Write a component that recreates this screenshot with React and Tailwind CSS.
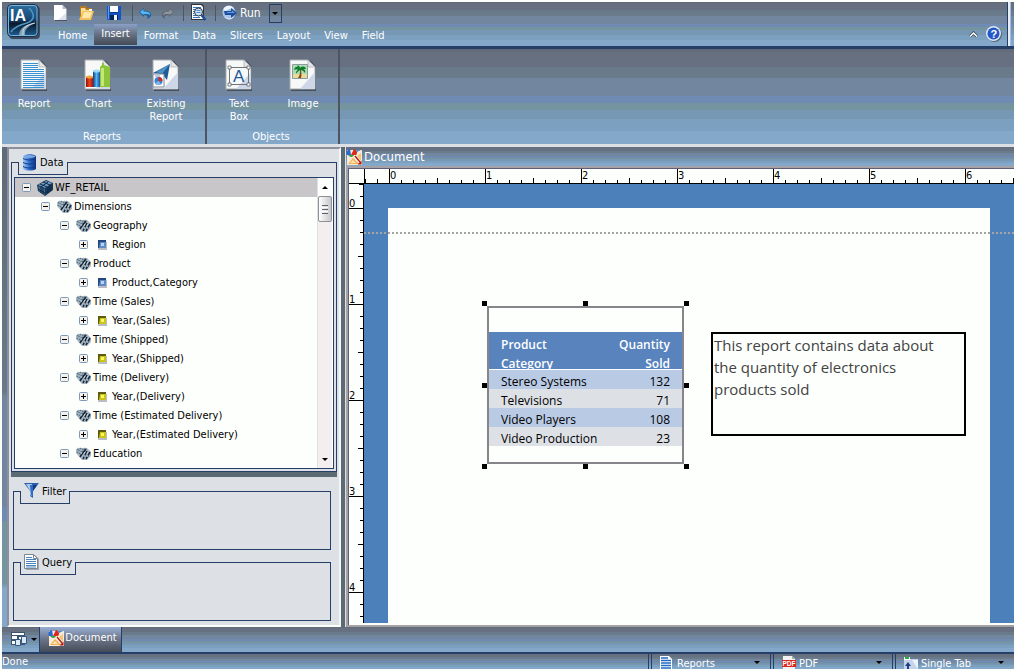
import React from "react";

const bands =
  "bg-[linear-gradient(to_bottom,#616775_0%,#667080_4%,#667080_19%,#687a8a_19%,#6a7b8b_31%,#72879f_31%,#72879f_50%,#6f8ab3_50%,#6f8ab3_57%,#7495a0_57%,#7495a0_64%,#7798b5_64%,#7798b5_74%,#7ca0c0_74%,#7ca0c0_86%,#84a8ca_86%,#84a8ca_100%)]";

const tabs = ["Home", "Insert", "Format", "Data", "Slicers", "Layout", "View", "Field"];

const tree = [
  { level: 0, label: "WF_RETAIL", icon: "cube" },
  { level: 1, label: "Dimensions", icon: "dim" },
  { level: 2, label: "Geography", icon: "dim" },
  { level: 3, label: "Region", icon: "blue" },
  { level: 2, label: "Product", icon: "dim" },
  { level: 3, label: "Product,Category", icon: "blue" },
  { level: 2, label: "Time (Sales)", icon: "dim" },
  { level: 3, label: "Year,(Sales)", icon: "yellow" },
  { level: 2, label: "Time (Shipped)", icon: "dim" },
  { level: 3, label: "Year,(Shipped)", icon: "yellow" },
  { level: 2, label: "Time (Delivery)", icon: "dim" },
  { level: 3, label: "Year,(Delivery)", icon: "yellow" },
  { level: 2, label: "Time (Estimated Delivery)", icon: "dim" },
  { level: 3, label: "Year,(Estimated Delivery)", icon: "yellow" },
  { level: 2, label: "Education", icon: "dim" },
];

const indents = ["pl-[7px]", "pl-[26px]", "pl-[45px]", "pl-[64px]"];

const sales = [
  { name: "Stereo Systems", sold: 132 },
  { name: "Televisions", sold: 71 },
  { name: "Video Players", sold: 108 },
  { name: "Video Production", sold: 23 },
];

const Caret = ({ className = "" }) => (
  <svg width="6" height="3" viewBox="0 0 6 3" className={`shrink-0 ${className}`}>
    <path d="M0 0h6L3 3z" fill="#000" />
  </svg>
);

const Logo = () => (
  <svg width="33" height="35" viewBox="0 0 33 35" className="shrink-0">
    <defs>
      <linearGradient id="logo" x1="0" y1="0" x2="0" y2="1">
        <stop offset="0" stopColor="#2d6f9f" />
        <stop offset="0.45" stopColor="#174a78" />
        <stop offset="0.6" stopColor="#0c1a2c" />
        <stop offset="1" stopColor="#1f6196" />
      </linearGradient>
    </defs>
    <rect x="2" y="2" width="31" height="33" rx="4" fill="#3d4c60" />
    <rect x="0.5" y="0.5" width="30.5" height="32" rx="4" fill="url(#logo)" stroke="#16304f" />
    <rect x="1.5" y="1.5" width="28.5" height="30" rx="3" fill="none" stroke="#7eb4d8" />
    <path d="M22 4c6 6 6 12-2 15-8 2-13 4-16 9" fill="none" stroke="#4f97c5" strokeWidth="1.500" />
    <path d="M28 19c-9 1-15 4-16 12h6c-1-6 4-9 10-12z" fill="#83a1b8" />
    <path d="M28 19c-9 2-13 5-12 12" fill="none" stroke="#d0e0eb" />
    <text x="3" y="17" fill="#fff" fontFamily="Liberation Sans, sans-serif" fontWeight="bold" fontSize="16">IA</text>
  </svg>
);

const NewIcon = () => (
  <svg width="15" height="16" viewBox="0 0 15 16">
    <path d="M2 1h9l3 4v11H2z" fill="#4c5260" />
    <path d="M1 0h8.500l4 4v11H1z" fill="#fff" />
    <path d="M9.500 0v4h4z" fill="#b8bec8" />
    <path d="M5 15l8-7v7z" fill="#dde3ee" />
  </svg>
);

const OpenIcon = () => (
  <svg width="17" height="16" viewBox="0 0 17 16">
    <path d="M2 15V2l1-1h5l1 2h5v11z" fill="#b7791f" />
    <path d="M3 3h4l1 2h5v5H3z" fill="#f8dc91" />
    <path d="M5 6h11l-3 9H1z" fill="#f3c05e" />
    <path d="M6 7h8l-2 6H4z" fill="#ffe8a8" />
    <path d="M11 4h3v2h-3z" fill="#fff" />
  </svg>
);

const SaveIcon = () => (
  <svg width="15" height="15" viewBox="0 0 15 15">
    <path d="M0 0h14v14H1l-1-1z" fill="#1554c0" />
    <path d="M3 0h8v6H3z" fill="#fff" />
    <path d="M1 0h1v13H1z" fill="#5aa1f0" />
    <path d="M3 9h8v5H3z" fill="#0a2458" />
    <path d="M7 9h3v5H7z" fill="#f5f5f5" />
    <path d="M3 6h8v1H3z" fill="#0b3b90" />
  </svg>
);

const UndoIcon = () => (
  <svg width="13" height="11" viewBox="0 0 13 11">
    <path d="M0 4l5-4v2.500c5 0 7 2 7 4.500 0 2-2 3-4 4 1-3 1-4-3-4V9z" fill="#1f5e9c" />
    <path d="M1 4l3.500-3V3.500c5 0 7 1 6.500 4-1-2-3-1.500-6.500-1.500V7z" fill="#59b8f2" />
  </svg>
);

const RedoIcon = () => (
  <svg width="13" height="11" viewBox="0 0 13 11">
    <path d="M12 4L7 0v2.500C2 2.500 0 4.500 0 7c0 2 1 3 3 4-1-3 0-4 4-4V9z" fill="#5d6470" />
    <path d="M11 4L7.500 1V3.500C3 3.500 1.500 4 1 7.500c2-2 3-1.500 6.500-1.500V7z" fill="#8f959e" />
  </svg>
);

const PreviewIcon = () => (
  <svg width="17" height="18" viewBox="0 0 17 18">
    <path d="M1 0h11l2 2v14H1z" fill="#30343c" />
    <path d="M2 1h9l2 2v12H2z" fill="#fff" />
    <path d="M3 3.500h8M3 5.500h2M3 7.500h1M3 9.500h1M3 11.500h3M3 13.500h7" stroke="#3477c4" />
    <circle cx="8.500" cy="8" r="4" fill="#c9e4f6" stroke="#2a313c" />
    <path d="M6.500 6.500h4M6.500 8.500h4" stroke="#568fc5" />
    <path d="M11.500 11l4 5" stroke="#1b4f99" strokeWidth="2.500" />
  </svg>
);

const RunIcon = () => (
  <svg width="16" height="16" viewBox="0 0 16 16">
    <ellipse cx="7" cy="7.500" rx="6.500" ry="7" fill="#a9c3e6" />
    <path d="M1 5c2-6 10-5 11-1-3-1-6 0-8 2z" fill="#eef5fc" />
    <path d="M2 6h7V3l6 5-6 5v-3H3z" fill="#1c4f9f" />
    <path d="M5 7h5V5.500L13 8H5z" fill="#679ae0" />
    <path d="M3 12c3 3 7 2 8 0" fill="none" stroke="#e4eefa" />
  </svg>
);

const Page = ({ children }) => (
  <svg width="28" height="32" viewBox="0 0 28 32">
    <path d="M2 2h20l5 6v24H2z" fill="#46505f" />
    <path d="M1 1h18l7 7v22H1z" fill="#f7f8f8" stroke="#a9abad" />
    <path d="M11 30L26 13v17z" fill="#cdd7e8" />
    <path d="M19 1v7h7z" fill="#e4e5e6" stroke="#a9abad" strokeWidth="0.700" />
    {children}
  </svg>
);

const ReportIcon = () => (
  <Page>
    <path
      d="M3 4.500h15M3 6.500h15M3 8.500h15M3 10.500h21M3 12.500h21M3 14.500h21M3 16.500h21M3 18.500h21M3 20.500h21M3 22.500h21M3 24.500h21M3 26.500h21M3 28.500h21"
      stroke="#3b90cf"
    />
  </Page>
);

const ChartIcon = () => (
  <Page>
    <defs>
      <linearGradient id="redBar">
        <stop offset="0" stopColor="#8c1208" />
        <stop offset="0.5" stopColor="#f0421c" />
        <stop offset="1" stopColor="#a01a0a" />
      </linearGradient>
      <linearGradient id="blueBar">
        <stop offset="0" stopColor="#0b3d80" />
        <stop offset="0.5" stopColor="#55b4f4" />
        <stop offset="1" stopColor="#114f9a" />
      </linearGradient>
    </defs>
    <path d="M2 18h7v10H2z" fill="url(#redBar)" />
    <ellipse cx="5.500" cy="18" rx="3.500" ry="1.500" fill="#f6a13a" />
    <path d="M9 12h7v16H9z" fill="url(#blueBar)" />
    <ellipse cx="12.500" cy="12" rx="3.500" ry="1.500" fill="#9dd9fb" />
    <path d="M16 8l2-2v-2h2v2l6 2v20H16z" fill="#8cc43c" />
    <path d="M17 9h3v18h-3z" fill="#c5e77a" />
  </Page>
);

const ExistingIcon = () => (
  <Page>
    <path d="M1 14L18 5l-3 16-4-5-6 10-2-2 6-9z" fill="#1e5b97" />
    <path d="M4 13L18 5 10 15z" fill="#4d91c6" />
    <path d="M1 15h11v13H1z" fill="#fff" stroke="#7c8796" />
    <circle cx="6.500" cy="22" r="4" fill="#3a7ed0" />
    <path d="M6.500 22v-4a4 4 0 0 1 4 4z" fill="#d32b20" />
    <path d="M6.500 22l-3.500 2a4 4 0 0 0 6 1z" fill="#86b6e8" />
    <path d="M3 17h5" stroke="#7797bb" />
  </Page>
);

const TextBoxIcon = () => (
  <Page>
    <path d="M4.500 8.500h19v17h-19z" fill="none" stroke="#70757d" />
    <path d="M3 7h3v3H3zM22 7h3v3h-3zM3 24h3v3H3zM22 24h3v3h-3z" fill="#fff" stroke="#60656d" strokeWidth="0.800" />
    <text x="8" y="23" fill="#1f5b9b" fontFamily="Liberation Sans, sans-serif" fontSize="17">A</text>
  </Page>
);

const ImageIcon = () => (
  <Page>
    <path d="M3.500 5.500h15v14h-15z" fill="#a9deb0" stroke="#8d9aa5" />
    <path d="M4 15h14v4H4z" fill="#eadb9a" />
    <path d="M11 10c0 4 0 6-2 9h3c1-3 0-6 0-9z" fill="#8a4a18" />
    <path d="M11 10C9 7 6 7 5 11c2-1 3-1 4 0-2 1-2 2-2 4 2-3 3-3 4-4 2 0 4 1 5 3 1-3-1-4-2-4h3c-1-3-4-3-6-1 0-2-2-3-3-2z" fill="#0e7a2a" />
  </Page>
);

const DocumentIcon = () => (
  <svg width="16" height="16" viewBox="0 0 16 16" className="shrink-0">
    <rect x="1" y="1" width="15" height="15" fill="#f7ead8" />
    <path d="M4 0a4 4 0 0 0-3 6h4z" fill="#2868cf" />
    <path d="M5 6l3-6c3 1 4 4 2 6z" fill="#dc271d" />
    <path d="M2 6h6a3 3 0 0 1-5 1z" fill="#35a445" />
    <path d="M10 1h5l-4 2z" fill="#3491d6" />
    <path d="M2 15l5-6 6 6z" fill="#eeb150" />
    <path d="M4 14l3-3 3 3z" fill="#fbe3b4" />
    <path d="M15 4v8l-4-5z" fill="#f3c674" />
    <path d="M9 7l5 6" stroke="#b51212" strokeWidth="1.200" />
    <path d="M15.500 11.500v4h-4z" fill="#b51212" />
  </svg>
);

const DatabaseIcon = () => (
  <svg width="15" height="17" viewBox="0 0 15 17">
    <defs>
      <linearGradient id="db">
        <stop offset="0" stopColor="#a5cbf6" />
        <stop offset="0.5" stopColor="#2c6cca" />
        <stop offset="1" stopColor="#0c2f7a" />
      </linearGradient>
    </defs>
    <path d="M1 2c3-2.500 10-2.500 13 0v13c-3 2-10 2-13 0z" fill="url(#db)" />
    <path d="M1 4.500c4 2 9 2 13 0M1 8.500c4 2 9 2 13 0M1 12.500c4 2 9 2 13 0" fill="none" stroke="#123a84" />
    <ellipse cx="7.500" cy="2.500" rx="6" ry="1.500" fill="#7ca9e6" />
  </svg>
);

const FilterIcon = () => (
  <svg width="15" height="16" viewBox="0 0 15 16">
    <path d="M0 0h15L9 8v7l-3-2V8z" fill="#2b5eae" />
    <path d="M2 1h6v12l-2-1V8z" fill="#a8c8ec" />
    <path d="M6 2h3v11l-2-1z" fill="#2f6bc4" />
    <path d="M9 2h4L9 8z" fill="#143b82" />
  </svg>
);

const QueryIcon = () => (
  <svg width="15" height="16" viewBox="0 0 15 16">
    <path d="M2 1h9l4 4v11H2z" fill="#9ea6b0" />
    <path d="M.5.5h9l4 4v10H.5z" fill="#fff" stroke="#7c8692" />
    <path d="M9.500.5v4h4" fill="none" stroke="#7c8692" />
    <path d="M2 3.500h6M2 5.500h10M2 7.500h10M2 9.500h10M2 11.500h10M2 13h10" stroke="#4b83bd" />
  </svg>
);

const TreeIcon = ({ kind }) => {
  if (kind === "cube") {
    return (
      <svg width="17" height="16" viewBox="0 0 17 16">
        <path d="M0 5l9-5 7 3v7l-8 6-7-5z" fill="#173654" />
        <path d="M1 5l8-4 6 2-7 5z" fill="#6f9cc7" />
        <path d="M1 6l7 3v6l-6-4z" fill="#3f6c98" />
        <path d="M3 4l7 3M6 2l7 3M4 7l7-5M1 9l7 4M4 7v6M6 8v6M11 7v6M13 5v6" stroke="#0e2740" />
      </svg>
    );
  }
  if (kind === "dim") {
    return (
      <svg width="15" height="14" viewBox="0 0 15 14">
        <path d="M2 1h9l4 4v4l-4 4H6L0 6V3z" fill="#a9b8c3" />
        <path d="M1 3l2-2M1 6l4-5M3 7l5-6M5 7l5-6" stroke="#5c7688" strokeWidth="1.400" strokeDasharray="1.500 1" />
        <path d="M4 10l3-5M7 12l4-8M10 12l4-7M6 7l4-5" stroke="#16283a" strokeWidth="1.600" />
        <path d="M5 7l1-2M8 7l1-2M11 7l1-2M8 10l1-2M11 10l1-2" stroke="#c3d3de" />
      </svg>
    );
  }
  return (
    <svg width="11" height="10" viewBox="0 0 11 10">
      <path d="M2 2h8v8H1z" fill="#b9bcc2" />
      <path d="M1 0h8v8H1z" fill={kind === "blue" ? "#24477f" : "#5c5a0e"} />
      <path d="M3 2h6v6H2z" fill={kind === "blue" ? "#5f8bc9" : "#c9c51c"} />
      <path d="M4 3h3v3H4z" fill={kind === "blue" ? "#b9d4f4" : "#fbf95c"} />
    </svg>
  );
};

const Toggle = ({ open, label }) => (
  <button type="button" aria-label={label} aria-expanded={open} className="shrink-0">
    <svg width="9" height="9" viewBox="0 0 9 9" className="block">
      <rect x="0.500" y="0.500" width="8" height="8" rx="1" fill="#f3f1ea" stroke="#7b9ab9" />
      <path d={open ? "M2 4.500h5" : "M2 4.500h5M4.500 2v5"} stroke="#000" />
    </svg>
  </button>
);

const RibbonButton = ({ icon, label, wide }) => (
  <button
    type="button"
    className={`flex flex-col items-center gap-1.5 ${wide ? "w-[72px] px-3" : "w-16 px-4"}`}
  >
    {icon}
    <span className="leading-[13px]">{label}</span>
  </button>
);

const RibbonGroup = ({ title, children }) => (
  <div className="flex flex-col justify-between border-r-2 border-[#4d5563] pt-2.5 pr-[3px]">
    <div className="flex items-start">{children}</div>
    <div className="pb-px text-center leading-[13px]">{title}</div>
  </div>
);

// Group box whose tab hangs over the top border
const Panel = ({ icon, title, className = "", children }) => (
  <section className={`flex flex-col border border-[#253f68] ${className}`}>
    <h2 className="-mt-px ml-1.5 flex h-[13px] items-center self-start border-x border-b border-[#253f68] bg-[#dde1e6] px-[3px]">
      <span className="-mt-3 flex items-center gap-[3px]">
        {icon}
        <span className="pt-0.5">{title}</span>
      </span>
    </h2>
    {children}
  </section>
);

const DataTree = () => (
  <div className="mx-0.5 mt-0.5 mb-0.5 flex min-h-0 flex-1 border border-[#253f68] bg-[#fdfffd]">
    <ul className="min-w-0 flex-1 overflow-hidden">
      {tree.map((node, i) => (
        <li
          key={node.label}
          className={`flex h-[19px] items-center ${indents[node.level]} ${i === 0 ? "bg-[#c8c6c9]" : ""}`}
        >
          <Toggle open={node.level < 3} label={node.label} />
          <span className="ml-1.5 flex w-[17px] shrink-0 justify-center">
            <TreeIcon kind={node.icon} />
          </span>
          <span className="ml-px pt-0.5 whitespace-nowrap">{node.label}</span>
        </li>
      ))}
    </ul>
    <div className="mr-px flex w-[15px] flex-col items-center border-l border-[#dde1e6] bg-[#f4eeee]">
      <button type="button" aria-label="Scroll up" className="flex h-[18px] w-full items-center justify-center bg-[#fdfffd]">
        <Caret className="rotate-180" />
      </button>
      <div className="flex h-[26px] w-full flex-col items-center justify-center gap-px rounded-xs border border-[#8f9096] bg-linear-to-r from-white to-[#c8c6c9]">
        <span className="h-px w-1.5 bg-[#60636b]" />
        <span className="h-px w-1.5 bg-white" />
        <span className="h-px w-1.5 bg-[#60636b]" />
        <span className="h-px w-1.5 bg-white" />
        <span className="h-px w-1.5 bg-[#60636b]" />
      </div>
      <div className="flex-1" />
      <button type="button" aria-label="Scroll down" className="flex h-[18px] w-full items-center justify-center">
        <Caret />
      </button>
    </div>
  </div>
);

const across = [0, 1, 2, 3, 4, 5, 6];
const down = [0, 1, 2, 3, 4];
const eighths = [12, 24, 36, 48, 60, 72, 84];

const HorizontalRuler = () => (
  <svg width="100%" height="14" className="block bg-[#fdfffd]" shapeRendering="crispEdges">
    <path d="M15.500 0v14M16.500 10v4M28.500 10v4" stroke="#000" />
    {across.map((n) => (
      <g key={n} transform={`translate(${n * 96 + 40} 0)`}>
        <path d="M.5 0v14" stroke="#000" />
        {eighths.map((x) => (
          <path key={x} d={`M${x}.5 ${x === 48 ? 9 : 11}V14`} stroke="#000" />
        ))}
        <text x="1" y="10" fontSize="11">{n}</text>
      </g>
    ))}
  </svg>
);

const VerticalRuler = () => (
  <svg width="14" height="100%" className="block bg-[#fdfffd]" shapeRendering="crispEdges">
    <path d="M10 .5h4M11 12.500h3" stroke="#000" />
    {down.map((n) => (
      <g key={n} transform={`translate(0 ${n * 96 + 24})`}>
        <path d="M0 .5h14" stroke="#000" />
        {eighths.map((y) => (
          <path key={y} d={`M${y === 48 ? 9 : 11} ${y}.5H14`} stroke="#000" />
        ))}
        <text x="0" y="-1" fontSize="11">{n}</text>
      </g>
    ))}
  </svg>
);

const handles = [
  "-top-[7px] -left-[7px]",
  "-top-[7px] left-[94px]",
  "-top-[7px] -right-[7px]",
  "top-[75px] -left-[7px]",
  "top-[75px] -right-[7px]",
  "-bottom-[7px] -left-[7px]",
  "-bottom-[7px] left-[94px]",
  "-bottom-[7px] -right-[7px]",
];

const ReportTable = () => (
  <div className="absolute top-[98px] left-[99px] w-[197px] border-2 border-[#878589] pt-6 pb-4 font-['Open_Sans','Noto_Sans',sans-serif] text-xs text-black">
    <table className="w-full border-collapse">
      <thead>
        <tr className="border-b border-white bg-[#5883bd] text-white">
          <th className="p-0 text-left font-semibold">
            <div className="h-[37px] overflow-hidden pt-[3px] pl-3 leading-[19px]">
              Product<br />Category
            </div>
          </th>
          <th className="p-0 text-right font-semibold">
            <div className="h-[37px] overflow-hidden pt-[3px] pr-3 leading-[19px]">
              Quantity<br />Sold
            </div>
          </th>
        </tr>
      </thead>
      <tbody>
        {sales.map((row, i) => (
          <tr key={row.name} className={i % 2 ? "bg-[#dde1e6]" : "bg-[#b9cbe4]"}>
            <td className="p-0 pt-1 pl-3 leading-[15px]">{row.name}</td>
            <td className="p-0 pt-1 pr-3 text-right leading-[15px]">{row.sold}</td>
          </tr>
        ))}
      </tbody>
    </table>
    {handles.map((pos) => (
      <span key={pos} className={`absolute size-[5px] bg-black ${pos}`} />
    ))}
  </div>
);

const DocumentWindow = () => (
  <main className="flex min-w-0 flex-1 flex-col border-l border-[#dde1e6]">
    <div className={`flex h-[19px] items-center gap-0.5 text-[13px] text-white ${bands}`}>
      <DocumentIcon />
      <h1 className="leading-4">Document</h1>
    </div>
    <div className="flex min-h-0 flex-1 flex-col border-t-2 border-b-2 border-l-2 border-[#a5a1a4]">
      <div className="flex min-h-0 flex-1 flex-col border-t border-l border-[#5d6078] bg-[#fdfffd] pb-0.5">
        <div className="border-b border-black">
          <HorizontalRuler />
        </div>
        <div className="flex min-h-0 flex-1">
          <div className="shrink-0 border-r border-black">
            <VerticalRuler />
          </div>
          <div className="relative flex min-w-0 flex-1 overflow-hidden bg-[#4b80bb] px-6 pt-6">
            <div className="relative flex-1 bg-[#fdfffd]">
              <ReportTable />
              <div className="absolute top-[124px] left-[323px] h-[104px] w-[255px] border-2 border-black pr-3 pl-px font-['Open_Sans','Noto_Sans',sans-serif] text-[15px] leading-[22px] text-[#434343]">
                This report contains data about the quantity of electronics products sold
              </div>
            </div>
            <div className="absolute inset-x-0 top-12 h-0.5 bg-[repeating-linear-gradient(to_right,#a5a5a5_0_2px,transparent_2px_4px)]" />
          </div>
        </div>
      </div>
    </div>
  </main>
);

const StatusSelect = ({ icon, name, label }) => (
  <label className="flex w-[122px] items-center border-l-4 border-double border-[#253f68] pt-0.5 pl-2">
    {icon}
    <select
      aria-label={name}
      className="ml-[3px] min-w-0 flex-1 appearance-none bg-transparent pt-0.5 leading-[13px] text-white"
      defaultValue={label}
    >
      <option>{label}</option>
    </select>
    <Caret className="mr-2.5" />
  </label>
);

const PdfIcon = () => (
  <svg width="14" height="14" viewBox="0 0 14 14" className="shrink-0">
    <path d="M1 0h9l3 3v11H1z" fill="#f2f2f2" />
    <path d="M10 0v3h3z" fill="#aaa" />
    <rect y="4" width="14" height="7" fill="#d8281f" />
    <text x="0.500" y="10" fill="#fff" fontFamily="Liberation Sans, sans-serif" fontWeight="bold" fontSize="6.500">PDF</text>
  </svg>
);

const ReportsIcon = () => (
  <svg width="14" height="14" viewBox="0 0 14 14" className="shrink-0">
    <path d="M0 0h9l3 3v11H0z" fill="#fff" />
    <path d="M1 2h7M1 4.500h10M1 7h10M1 9.500h10M1 12h10" stroke="#1f6ac2" strokeWidth="1.300" />
  </svg>
);

const TabIcon = () => (
  <svg width="14" height="12" viewBox="0 0 14 12" className="shrink-0">
    <path d="M0 2h14v10H0z" fill="#c5d4ea" />
    <path d="M0 0h6v3H0z" fill="#fff" />
    <path d="M1 0h4v2H1z" fill="#1fb53a" />
    <path d="M4 5l3 4H5v3H3V9H1z" fill="#1b4086" />
    <path d="M8 3h6v9z" fill="#edf3fb" />
  </svg>
);

const WindowsIcon = () => (
  <svg width="16" height="15" viewBox="0 0 16 15">
    <path d="M0 0h14v13H0z" fill="#3b546f" />
    <path d="M1 1h12v2H1zM1 4h5v3H1zM1 9h5v3H1zM8 5h5v6H8z" fill="#fff" />
    <path d="M4.500 7.500h5v6h-5zM10.500 4.500h5v7h-5z" fill="#dce9f5" stroke="#34597c" />
  </svg>
);

const Separator = () => <span className="h-4 w-px bg-[#4d5563]" />;

export default function App() {
  return (
    <div className="h-screen bg-[#fdfffd] p-0.5 font-['DejaVu_Sans_Condensed','DejaVu_Sans',sans-serif] text-[11px] text-black">
      <div className="flex h-full flex-col overflow-hidden">
        <header className={`flex h-[47px] shrink-0 border-b-3 border-[#253f68] text-white ${bands}`}>
          <div className="w-12 shrink-0 pt-0.5 pl-[5px]">
            <Logo />
          </div>
          <div className="flex flex-1 flex-col">
            <div className="flex h-[22px] items-center">
              <button type="button" aria-label="New" className="ml-[3px]"><NewIcon /></button>
              <button type="button" aria-label="Open" className="ml-2.5"><OpenIcon /></button>
              <button type="button" aria-label="Save" className="mr-2.5 ml-3"><SaveIcon /></button>
              <Separator />
              <button type="button" aria-label="Undo" className="ml-1.5"><UndoIcon /></button>
              <button type="button" aria-label="Redo" className="mr-2 ml-2.5"><RedoIcon /></button>
              <Separator />
              <button type="button" aria-label="Preview" className="mr-2 ml-1.5"><PreviewIcon /></button>
              <Separator />
              <button type="button" className="ml-1.5 flex items-center gap-0.5 text-xs">
                <RunIcon />
                Run
              </button>
              <button type="button" aria-label="Run options" className="ml-2 flex h-[19px] w-[13px] items-center justify-center border border-[#253f68]">
                <Caret />
              </button>
            </div>
            <nav className="flex items-start pl-px">
              {tabs.map((tab) => (
                <button
                  key={tab}
                  type="button"
                  className={
                    tab === "Insert"
                      ? "h-[21px] bg-linear-to-b from-[#8ba0c8] via-[#667080] to-[#444a57] px-[7px]"
                      : "h-[21px] px-[7px] pt-1"
                  }
                >
                  {tab}
                </button>
              ))}
            </nav>
          </div>
          <div className="flex items-center gap-2 pt-5 pr-[5px]">
            <button type="button" aria-label="Collapse ribbon">
              <svg width="9" height="7" viewBox="0 0 9 7">
                <path d="M1 5.500L4.500 2 8 5.500" fill="none" stroke="#384656" strokeWidth="3" />
                <path d="M1 5.500L4.500 2 8 5.500" fill="none" stroke="#fff" strokeWidth="1.500" />
              </svg>
            </button>
            <button type="button" aria-label="Help">
              <svg width="16" height="16" viewBox="0 0 16 16">
                <circle cx="8.500" cy="8.500" r="7.500" fill="#55657a" />
                <circle cx="7.500" cy="7.500" r="7.500" fill="#dfe8f5" />
                <circle cx="7.500" cy="7.500" r="6" fill="#2458c6" />
                <text x="4.500" y="11.500" fill="#fff" fontFamily="Liberation Sans, sans-serif" fontWeight="bold" fontSize="11">?</text>
              </svg>
            </button>
          </div>
          <div className="mr-[3px] w-1 border-r border-l border-l-[#253f68] border-r-[#9dbbe4] bg-[#e8edf5]" />
        </header>

        <div className={`flex h-[95px] shrink-0 text-white ${bands}`}>
          <RibbonGroup title="Reports">
            <RibbonButton icon={<ReportIcon />} label="Report" />
            <RibbonButton icon={<ChartIcon />} label="Chart" />
            <RibbonButton icon={<ExistingIcon />} label="Existing Report" wide />
          </RibbonGroup>
          <RibbonGroup title="Objects">
            <RibbonButton icon={<TextBoxIcon />} label="Text Box" />
            <RibbonButton icon={<ImageIcon />} label="Image" />
          </RibbonGroup>
        </div>

        <div className="flex min-h-0 flex-1 border-t-3 border-[#dde1e6]">
          <div className="w-[5px] shrink-0 bg-[linear-gradient(to_bottom,#5f6b76_0%,#687a8a_51%,#72879f_52%,#72879f_75%,#6f8ab3_75%,#6f8ab3_78%,#7495a0_78%,#7495a0_91%,#84a8ca_92%)]" />
          <aside className="flex w-[334px] shrink-0 flex-col border-t-2 border-r-2 border-b-2 border-l-2 border-t-[#8d8f9d] border-r-[#f4f6f8] border-b-[#fdfffd] border-l-[#8d8f9d] bg-[#dde1e6] px-0.5 pt-[13px]">
            <Panel icon={<DatabaseIcon />} title="Data" className="min-h-0 flex-1">
              <DataTree />
            </Panel>
            <div className="h-[5px] shrink-0 bg-[#5c6a74]" />
            <div className="mt-3.5 mr-1.5 mb-1 ml-0.5 flex flex-col gap-3">
              <Panel icon={<FilterIcon />} title="Filter" className="h-[59px]" />
              <Panel icon={<QueryIcon />} title="Query" className="h-[59px]" />
            </div>
          </aside>
          <div className="w-1 shrink-0 bg-[#5c6a74]" />
          <DocumentWindow />
        </div>

        <div className={`flex h-[27px] shrink-0 border-b-2 border-[#253f68] ${bands}`}>
          <button type="button" aria-label="Windows" className="flex w-[38px] items-center justify-center gap-1 border-r border-[#253f68] pl-1.5">
            <WindowsIcon />
            <Caret />
          </button>
          <button
            type="button"
            className="flex w-[82px] items-center justify-center gap-px border-r border-[#253f68] bg-linear-to-b from-[#9aaed3] via-[#6a7487] to-[#454b58] pb-1 pl-1 text-white"
          >
            <DocumentIcon />
            <span className="pt-0.5">Document</span>
          </button>
        </div>

        <footer className={`flex h-[15px] shrink-0 overflow-hidden text-white ${bands}`}>
          <span className="flex-1">Done</span>
          <StatusSelect icon={<ReportsIcon />} name="Output type" label="Reports" />
          <StatusSelect icon={<PdfIcon />} name="Format" label="PDF" />
          <StatusSelect icon={<TabIcon />} name="Output target" label="Single Tab" />
        </footer>
      </div>
    </div>
  );
}
